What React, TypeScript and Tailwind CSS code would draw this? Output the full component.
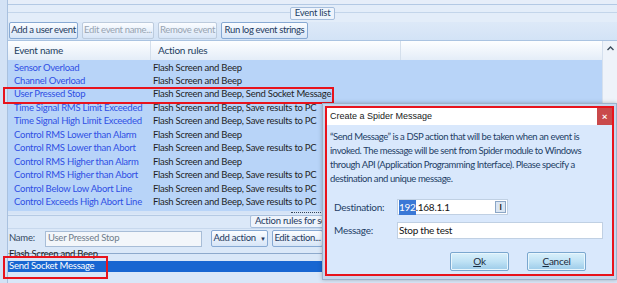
import React from "react";

const BEEP = "Flash Screen and Beep";
const SAVE = "Flash Screen and Beep, Save results to PC";

const events: [string, string][] = [
  ["Sensor Overload", BEEP],
  ["Channel Overload", BEEP],
  ["User Pressed Stop", "Flash Screen and Beep, Send Socket Message"],
  ["Time Signal RMS Limit Exceeded", SAVE],
  ["Time Signal High Limit Exceeded", SAVE],
  ["Control RMS Lower than Alarm", BEEP],
  ["Control RMS Lower than Abort", SAVE],
  ["Control RMS Higher than Alarm", BEEP],
  ["Control RMS Higher than Abort", SAVE],
  ["Control Below Low Abort Line", SAVE],
  ["Control Exceeds High Abort Line", SAVE],
];

function RibbonButton({ label, width, disabled }: { label: string; width: string; disabled?: boolean }) {
  return (
    <div
      className={`${width} h-[17px] flex items-center justify-center rounded-[2px] border bg-gradient-to-b from-[#fbfdff] to-[#d7e5f7] whitespace-nowrap overflow-hidden text-[9.5px] tracking-[-0.35px] ${
        disabled ? "border-[#bccbdd] text-[#97a3b1]" : "border-[#87a9d3] text-[#1e3a5f]"
      }`}
    >
      {label}
    </div>
  );
}

function DialogButton({ first, rest }: { first: string; rest: string }) {
  return (
    <div className="w-[59px] h-[19px] flex items-center justify-center border border-[#7aa7cf] rounded-[2px] bg-gradient-to-b from-[#d9f0fb] via-[#bfe2f5] to-[#9ccbe9] text-[#1b2b3c] shadow-[inset_0_0_0_1px_#e8f6fd]">
      <span className="underline">{first}</span>
      <span>{rest}</span>
    </div>
  );
}

export default function App() {
  return (
    <div className="relative w-[617px] h-[283px] overflow-hidden bg-[#dbe8f8] font-['Lato','Liberation_Sans',sans-serif] text-[9.5px] tracking-[-0.25px] text-[#1e3a5f] flex">
      {/* left strip */}
      <div className="w-[8px] shrink-0 bg-[#d3e2f5] border-r border-[#a9c1df]" />

      {/* main panel */}
      <div className="flex-1 flex flex-col">
        {/* group title strip */}
        <div className="h-[22px] shrink-0 flex flex-col">
          <div className="h-[5px] border-b border-[#b3c9e4] bg-[#e6eef9]" />
          <div className="relative flex-1 bg-[#e3edf9] flex items-start justify-center">
            <div className="absolute left-0 right-0 top-[7px] border-t border-[#c3d5ea]" />
            <div className="relative mt-[2px] px-[4px] h-[13px] flex items-center border border-[#a6bedc] bg-[#eef4fc] rounded-[2px] text-[#233f62]">
              Event list
            </div>
          </div>
        </div>

        {/* buttons row */}
        <div className="h-[19px] shrink-0 flex gap-[4px] pl-[1px] bg-gradient-to-b from-[#dde9f8] to-[#d3e3f6] border-b border-[#aac3e1]">
          <RibbonButton label="Add a user event" width="w-[69px]" />
          <RibbonButton label="Edit event name..." width="w-[72px]" disabled />
          <RibbonButton label="Remove event" width="w-[59px]" disabled />
          <RibbonButton label="Run log event strings" width="w-[87px]" />
        </div>

        {/* table */}
        <div className="h-[170px] shrink-0 flex">
          <div className="flex-1 flex flex-col bg-[#b8d4f8]">
            <div className="h-[19px] shrink-0 flex bg-gradient-to-b from-[#fdfeff] to-[#e4edf8] text-[#23405f] text-[10px]">
              <div className="w-[143px] pl-[6px] flex items-center border-r border-[#d4dfec]">Event name</div>
              <div className="w-[250px] pl-[7px] flex items-center border-r border-[#d4dfec]">Action rules</div>
            </div>
            <div className="flex flex-col pt-[1px]">
              {events.map(([name, rules]) => (
                <div key={name} className="h-[13.45px] flex items-center whitespace-nowrap">
                  <div className="w-[145px] pl-[6px] text-[#2f4fe4]">{name}</div>
                  <div className="text-[#1f1f1f]">{rules}</div>
                </div>
              ))}
            </div>
          </div>
          <div className="w-[15px] shrink-0 bg-[#eef3fa] border-l border-[#d5e0ee] flex justify-center pt-[5px]">
            <svg width="7" height="5" viewBox="0 0 7 5">
              <path d="M0.5 4 L3.5 1 L6.5 4" fill="none" stroke="#3c4a5a" strokeWidth="1.4" />
            </svg>
          </div>
        </div>

        {/* splitter */}
        <div className="h-[3px] shrink-0 flex justify-center bg-[#d6e4f6]">
          <div className="w-[44px] mt-[1px] border-t border-dotted border-[#34465c]" />
        </div>

        {/* lower panel */}
        <div className="flex-1 flex flex-col bg-[#dbe8f8]">
          <div className="h-[14px] shrink-0 relative flex justify-start">
            <div className="absolute left-0 right-0 top-[1px] border-t border-[#b5cae4]" />
            <div className="relative ml-[242px] mt-[1px] h-[13px] px-[4px] flex items-center border border-[#a6bedc] bg-[#eef4fc] rounded-[2px] whitespace-nowrap">
              Action rules for selected event
            </div>
          </div>
          <div className="h-[20px] shrink-0 flex items-center gap-[4px] border-t border-[#c7d8ed] whitespace-nowrap">
            <span className="w-[33px] pl-[1px] text-[#34495f]">Name:</span>
            <div className="w-[157px] h-[16px] flex items-center pl-[2px] border border-[#a8bdd7] bg-[#f3f6fa] text-[#6f7d8c]">
              User Pressed Stop
            </div>
            <div className="w-[1px]" />
            <div className="w-[57px] h-[17px] flex items-center justify-center gap-[4px] border border-[#87a9d3] rounded-[2px] bg-gradient-to-b from-[#fbfdff] to-[#d7e5f7]">
              Add action <span className="text-[6px]">▼</span>
            </div>
            <RibbonButton label="Edit action..." width="w-[51px]" />
            <RibbonButton label="Remove" width="w-[50px]" />
          </div>
          <div className="flex-1 flex flex-col mt-[5px] border-t border-[#8da9cc] bg-[#d9e7f8]">
            <div className="h-[11px] -mt-[5px] pl-[1px] text-[#1b1b1b] flex items-center whitespace-nowrap">{BEEP}</div>
            <div className="h-[11px] mt-[1px] pl-[1px] bg-[#1866d1] text-white flex items-center whitespace-nowrap">
              Send Socket Message
            </div>
          </div>
        </div>
      </div>

      {/* red annotation boxes */}
      <div className="absolute left-[3px] top-[87px] w-[331px] h-[17px] border-2 border-[#e8131c]" />
      <div className="absolute left-[3px] top-[256px] w-[105px] h-[23px] border-2 border-[#e8131c]" />

      {/* dialog */}
      <div className="absolute left-[322px] top-[103px] w-[295px] h-[177px] bg-[#c5d7ee] border border-[#9cb2cc] p-[2px] shadow-[0_0_4px_rgba(0,0,0,0.25)]">
        <div className="w-[289px] h-[170px] border-2 border-[#e8131c] flex flex-col bg-[#d9e8fc]">
          <div className="h-[17px] shrink-0 bg-white flex items-center justify-between pl-[3px]">
            <span className="text-[9px] tracking-normal text-[#1a1a1a] font-['Liberation_Sans',sans-serif]">
              Create a Spider Message
            </span>
            <div className="w-[15px] h-[17px] bg-[#c9494b] flex items-center justify-center text-white text-[10px] font-bold">
              ×
            </div>
          </div>
          <div className="flex-1 flex flex-col px-[3px] text-[#233e66] text-[10px] whitespace-nowrap">
            <p className="mt-[5px] leading-[14px] text-[9.5px] tracking-[-0.42px]">
              “Send Message” is a DSP action that will be taken when an event is
              <br />
              invoked. The message will be sent from Spider module to Windows
              <br />
              through API (Application Programming Interface). Please specify a
              <br />
              destination and unique message.
            </p>
            <div className="mt-[13px] flex items-center h-[16px]">
              <span className="w-[67px] pl-[4px]">Destination:</span>
              <div className="w-[111px] h-[16px] bg-white border border-[#c0d0e3] flex items-center pl-[1px] text-[#141414] relative">
                <span className="bg-[#3a78d6] text-white">192</span>.168.1.1
                <div className="absolute right-[1px] top-[1px] w-[11px] h-[12px] border border-[#8ba6c6] bg-[#dbe6f3] flex items-center justify-center text-[8px] font-bold">
                  I
                </div>
              </div>
            </div>
            <div className="mt-[7px] flex items-center h-[17px]">
              <span className="w-[67px] pl-[4px]">Message:</span>
              <div className="w-[206px] h-[17px] bg-white border border-[#c0d0e3] flex items-center pl-[1px] text-[#141414]">
                Stop the test
              </div>
            </div>
            <div className="mt-[13px] flex gap-[18px] pl-[120px]">
              <DialogButton first="O" rest="k" />
              <DialogButton first="C" rest="ancel" />
            </div>
          </div>
        </div>
      </div>
    </div>
  );
}
